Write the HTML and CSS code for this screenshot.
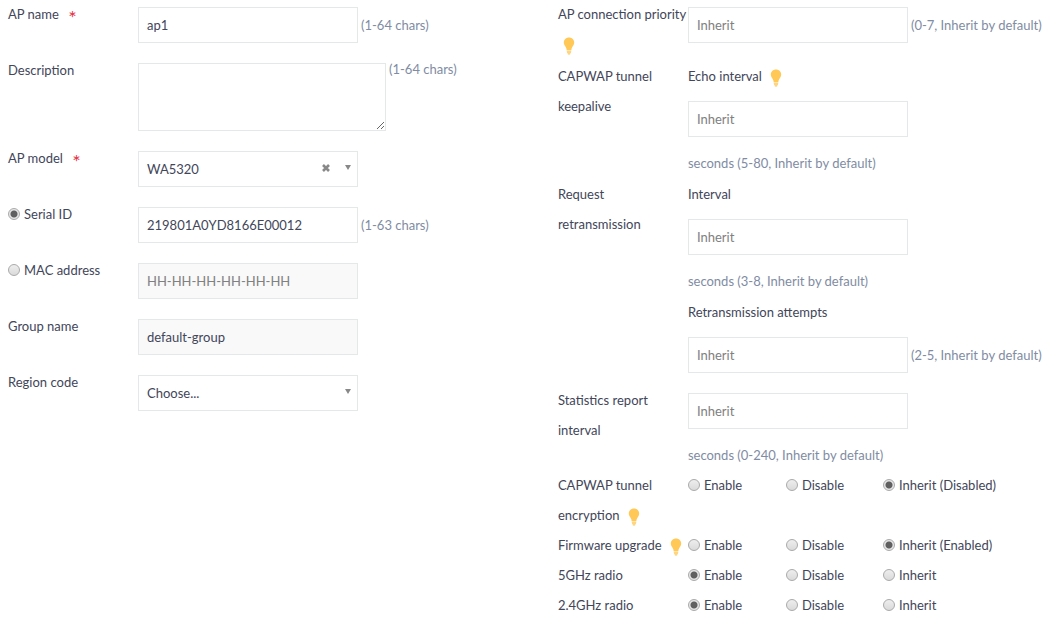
FILE: index.html
```html
<!DOCTYPE html>
<html lang="en">
<head>
    <meta charset="UTF-8">
    <meta name="viewport" content="width=device-width, initial-scale=1.0">
    <title>AP settings</title>
    <link rel="stylesheet" href="styles.css">
</head>
<body>
    <!-- bulb icon used for the hints -->
    <svg class="defs" width="0" height="0" aria-hidden="true">
        <symbol id="bulb" viewBox="0 0 12 18">
            <path d="M6 0.500C3 .5 .8 2.700 .8 5.500c0 2 1.100 3.200 1.900 4.500.6 1 .9 2 1 3.200h4.600c.1-1.200.4-2.200 1-3.200.8-1.300 1.900-2.500 1.900-4.500C11.200 2.700 9 .5 6 .5z"/>
            <path d="M3.800 13.800h4.400v1H3.800zM4 15.300h4v1H4zM4.900 16.600h2.200v.8H4.900z"/>
        </symbol>
    </svg>

    <form class="form">
        <!-- basic settings -->
        <div class="column">
            <div class="row">
                <label class="label" for="ap-name">AP name <span class="required">*</span></label>
                <div class="field">
                    <input class="input" type="text" id="ap-name" value="ap1">
                    <span class="hint">(1-64 chars)</span>
                </div>
            </div>
            <div class="row">
                <label class="label" for="description">Description</label>
                <div class="field field-top">
                    <textarea class="textarea" id="description"></textarea>
                    <span class="hint hint-top">(1-64 chars)</span>
                </div>
            </div>
            <div class="row">
                <label class="label" for="ap-model">AP model <span class="required">*</span></label>
                <div class="field">
                    <div class="select-box">
                        <select class="input" id="ap-model">
                            <option>WA5320</option>
                        </select>
                        <button class="clear" type="button" aria-label="Clear">
                            <svg width="8" height="8" viewBox="0 0 8 8"><path d="M1 1l6 6M7 1L1 7" stroke="#888" stroke-width="2.600"/></svg>
                        </button>
                    </div>
                </div>
            </div>
            <div class="row">
                <div class="label">
                    <label class="option"><input class="radio" type="radio" name="id-type" checked>Serial ID</label>
                </div>
                <div class="field">
                    <input class="input" type="text" aria-label="Serial ID" value="219801A0YD8166E00012">
                    <span class="hint">(1-63 chars)</span>
                </div>
            </div>
            <div class="row">
                <div class="label">
                    <label class="option"><input class="radio" type="radio" name="id-type">MAC address</label>
                </div>
                <div class="field">
                    <input class="input" type="text" aria-label="MAC address" placeholder="HH-HH-HH-HH-HH-HH" disabled>
                </div>
            </div>
            <div class="row">
                <label class="label" for="group-name">Group name</label>
                <div class="field">
                    <input class="input" type="text" id="group-name" value="default-group" disabled>
                </div>
            </div>
            <div class="row">
                <label class="label" for="region-code">Region code</label>
                <div class="field">
                    <div class="select-box">
                        <select class="input" id="region-code">
                            <option>Choose...</option>
                        </select>
                    </div>
                </div>
            </div>
        </div>

        <!-- advanced settings -->
        <div class="column">
            <div class="row row-tall">
                <label class="label" for="priority">AP connection priority <svg class="bulb"><use href="#bulb"/></svg></label>
                <div class="field">
                    <input class="input" type="text" id="priority" placeholder="Inherit">
                    <span class="hint">(0-7, Inherit by default)</span>
                </div>
            </div>
            <div class="row">
                <div class="label">CAPWAP tunnel keepalive</div>
                <div class="group">
                    <label class="title" for="echo">Echo interval <svg class="bulb"><use href="#bulb"/></svg></label>
                    <input class="input" type="text" id="echo" placeholder="Inherit">
                    <span class="hint">seconds (5-80, Inherit by default)</span>
                </div>
            </div>
            <div class="row">
                <div class="label">Request retransmission</div>
                <div class="groups">
                    <div class="group">
                        <label class="title" for="interval">Interval</label>
                        <input class="input" type="text" id="interval" placeholder="Inherit">
                        <span class="hint">seconds (3-8, Inherit by default)</span>
                    </div>
                    <div class="group">
                        <label class="title" for="attempts">Retransmission attempts</label>
                        <div class="inline">
                            <input class="input" type="text" id="attempts" placeholder="Inherit">
                            <span class="hint">(2-5, Inherit by default)</span>
                        </div>
                    </div>
                </div>
            </div>
            <div class="row">
                <label class="label" for="statistics">Statistics report interval</label>
                <div class="group group-plain">
                    <input class="input" type="text" id="statistics" placeholder="Inherit">
                    <span class="hint">seconds (0-240, Inherit by default)</span>
                </div>
            </div>
            <div class="row">
                <div class="label">CAPWAP tunnel encryption <svg class="bulb"><use href="#bulb"/></svg></div>
                <div class="options">
                    <label class="option"><input class="radio" type="radio" name="encryption">Enable</label>
                    <label class="option"><input class="radio" type="radio" name="encryption">Disable</label>
                    <label class="option"><input class="radio" type="radio" name="encryption" checked>Inherit (Disabled)</label>
                </div>
            </div>
            <div class="row">
                <div class="label">Firmware upgrade <svg class="bulb"><use href="#bulb"/></svg></div>
                <div class="options">
                    <label class="option"><input class="radio" type="radio" name="firmware">Enable</label>
                    <label class="option"><input class="radio" type="radio" name="firmware">Disable</label>
                    <label class="option"><input class="radio" type="radio" name="firmware" checked>Inherit (Enabled)</label>
                </div>
            </div>
            <div class="row">
                <div class="label">5GHz radio</div>
                <div class="options">
                    <label class="option"><input class="radio" type="radio" name="radio5" checked>Enable</label>
                    <label class="option"><input class="radio" type="radio" name="radio5">Disable</label>
                    <label class="option"><input class="radio" type="radio" name="radio5">Inherit</label>
                </div>
            </div>
            <div class="row">
                <div class="label">2.4GHz radio</div>
                <div class="options">
                    <label class="option"><input class="radio" type="radio" name="radio24" checked>Enable</label>
                    <label class="option"><input class="radio" type="radio" name="radio24">Disable</label>
                    <label class="option"><input class="radio" type="radio" name="radio24">Inherit</label>
                </div>
            </div>
        </div>
    </form>
</body>
</html>
```
FILE: styles.css
```css
* {
    box-sizing: border-box;
}
body {
    margin: 0;
    background-color: #fff;
    color: #424659;
    font-family: Lato, sans-serif;
    font-size: 13px;
    line-height: 30px;
}
.defs {
    display: block;
}
.form {
    display: grid;
    grid-template-columns: 12fr 11fr;
    margin-top: -1px;
}
.column {
    min-width: 0;
    padding-left: 8px;
}
.row {
    display: flex;
    align-items: flex-start;
}
.row-tall {
    min-height: 62px;
}
.label {
    flex: none;
    width: 130px;
}
.required {
    margin-left: 6px;
    color: #e8303f;
    font-size: 20px;
    line-height: 20px;
    vertical-align: -6px;
}

/* fields */
.field {
    display: flex;
    align-items: center;
    gap: 3px;
    padding: 8px 0 12px;
}
.field-top {
    align-items: flex-start;
}
.input,
.textarea {
    display: block;
    width: 220px;
    height: 36px;
    margin: 0;
    padding: 0 8px;
    border: 1px solid #e5e8e8;
    border-radius: 0;
    background-color: #fff;
    color: #424659;
    font: inherit;
}
.textarea {
    width: 248px;
    height: 68px;
}
.input::placeholder {
    color: #808080;
}
.input:disabled {
    background-color: #f9f9f9;
}
.hint {
    color: #7f8ca3;
    white-space: nowrap;
}
.hint-top {
    line-height: 12px;
}

/* drop-downs */
.select-box {
    position: relative;
}
.select-box select {
    appearance: none;
}
.select-box::after {
    content: "";
    position: absolute;
    top: 14px;
    right: 7px;
    border: 3px solid transparent;
    border-top: 5px solid #888;
    border-bottom: 0;
    pointer-events: none;
}
.clear {
    position: absolute;
    top: 9px;
    right: 24px;
    display: flex;
    padding: 4px;
    border: 0;
    background: none;
    cursor: pointer;
}

/* titled inputs on the right side */
.group {
    display: flex;
    flex-direction: column;
}
.group .input {
    margin: 10px 0 11px;
}
.group .hint {
    margin-bottom: 1px;
}
.groups {
    padding-bottom: 1px;
}
.group-plain .input {
    margin-top: 8px;
}
.group-plain .hint {
    margin-bottom: 0;
}
.inline {
    display: flex;
    align-items: center;
    gap: 3px;
}

/* radios */
.options {
    display: grid;
    grid-template-columns: 98px 97px auto;
}
.option {
    display: flex;
    align-items: center;
    gap: 4px;
    white-space: nowrap;
}
.radio {
    appearance: none;
    width: 12px;
    height: 12px;
    margin: 0;
    border: 1px solid #aaa;
    border-radius: 50%;
    background: linear-gradient(#eee, #dadada);
}
.radio:checked {
    background: radial-gradient(circle, #606060 0 2px, #606060 3px, #e6e6e6 4px);
}
.bulb {
    width: 12px;
    height: 18px;
    margin-left: 5px;
    fill: #ffc857;
    vertical-align: middle;
}
```
